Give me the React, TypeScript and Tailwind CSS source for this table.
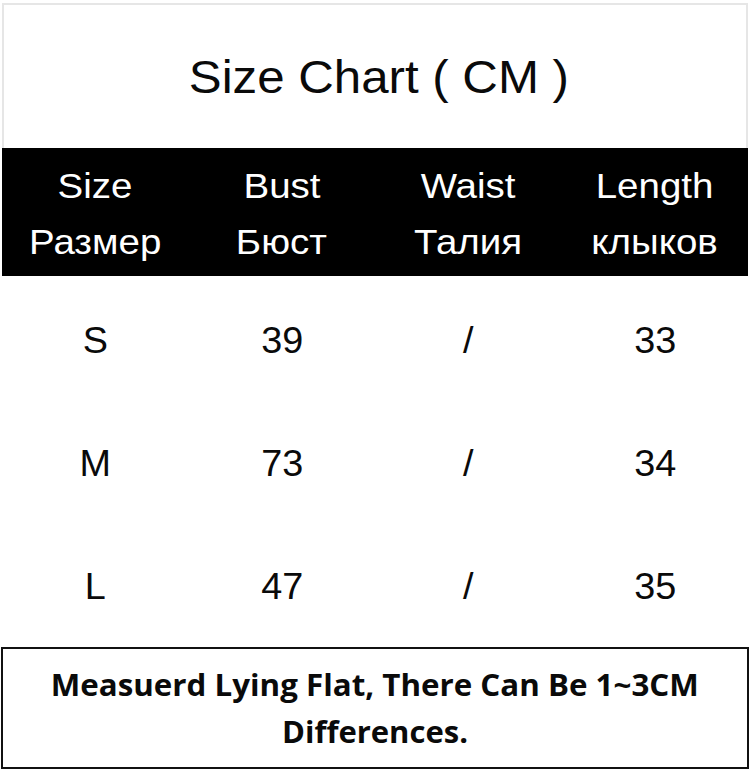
import React from "react";

const headers = [
  ["Size", "Размер"],
  ["Bust", "Бюст"],
  ["Waist", "Талия"],
  ["Length", "клыков"],
];

const rows = [
  ["S", "39", "/", "33"],
  ["M", "73", "/", "34"],
  ["L", "47", "/", "35"],
];

export default function App() {
  return (
    <div className="w-[750px] h-[771px] bg-white overflow-hidden flex flex-col font-['Liberation_Sans',Arial,sans-serif] text-[#0a0a0a]">
      <div className="mt-[3px] mx-[2px] h-[145px] border-t-2 border-x-2 border-[#e6e6e6] flex items-center justify-center">
        <span className="text-[46px] leading-none scale-x-[1.07] pl-[8px]">Size Chart ( CM )</span>
      </div>
      <div className="mx-[2px] h-[128px] bg-black grid grid-cols-4 pt-[10px]">
        {headers.map(([en, ru]) => (
          <div key={en} className="flex flex-col items-center text-white text-[35px] leading-[56px]">
            <span className="scale-x-[1.1]">{en}</span>
            <span className="scale-x-[1.1]">{ru}</span>
          </div>
        ))}
      </div>
      <div className="mx-[2px] pt-[3px] flex flex-col">
        {rows.map((r) => (
          <div key={r[0]} className="h-[123px] grid grid-cols-4 items-center">
            {r.map((c, i) => (
              <div key={i} className="text-center text-[36px] leading-none scale-x-[1.05]">
                {c}
              </div>
            ))}
          </div>
        ))}
      </div>
      <div className="-mt-px mx-[1px] h-[122px] border-2 border-[#111] flex flex-col items-center justify-center font-['Open_Sans',sans-serif] font-bold text-[31px] leading-[47px] text-[#0a0a0a]">
        <span className="scale-x-[1.01]">Measuerd Lying Flat, There Can Be 1~3CM</span>
        <span>Differences.</span>
      </div>
    </div>
  );
}
